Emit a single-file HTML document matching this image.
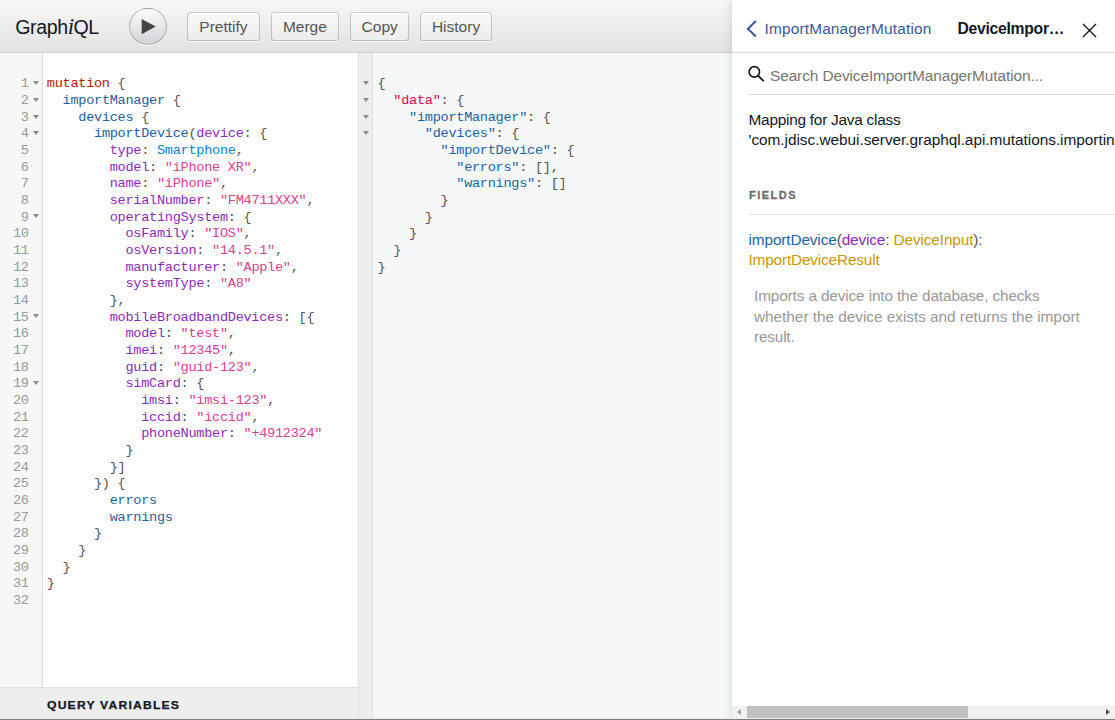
<!DOCTYPE html>
<html lang="en">
<head>
<meta charset="utf-8">
<title>GraphiQL</title>
<style>
*{box-sizing:border-box}
html,body{margin:0;padding:0;width:1115px;height:720px;overflow:hidden;background:#fff}
body{font-family:"Liberation Sans",sans-serif;font-size:14.6px;color:#141823;position:relative}
#app{position:absolute;left:0;top:0;width:1115px;height:720px;overflow:hidden}

/* ---------- top bar ---------- */
#topbar{position:absolute;left:0;top:0;width:732px;height:52.7px;background:linear-gradient(#f7f7f7,#e2e2e2);border-bottom:1px solid #d0d0d0}
#title{position:absolute;left:15.2px;top:14.1px;font-size:19.6px;line-height:26px;color:#141823;white-space:nowrap;letter-spacing:-0.4px}
#title em{font-family:"Liberation Serif",serif;font-size:23px;line-height:20px;font-style:italic;letter-spacing:-0.6px}
#exec{position:absolute;left:129.2px;top:7.5px;width:37.8px;height:37.4px;border-radius:50%;border:1px solid rgba(0,0,0,.25);background:linear-gradient(#fdfdfd,#d2d3d6);box-shadow:0 1px 0 #fff}
#exec svg{position:absolute;left:0;top:0;width:35.4px;height:35.4px}
.tb{position:absolute;top:12px;padding-top:1.2px;height:28.6px;border-radius:3.3px;background:linear-gradient(#f9f9f9,#ececec);box-shadow:inset 0 0 0 1px rgba(0,0,0,.2),0 1px 0 rgba(255,255,255,.7),inset 0 2px #fff;color:#555;font-size:15.5px;line-height:27px;text-align:center;white-space:nowrap}

/* ---------- query editor ---------- */
#qgutter{position:absolute;left:0;top:52.7px;width:43px;height:634px;background:#f7f7f7;border-right:1px solid #ddd}
#qed{position:absolute;left:43px;top:52.7px;width:314.5px;height:634px;background:#fff}
.code{position:absolute;margin:0;font-family:"Liberation Mono",monospace;font-size:13.6px;letter-spacing:-0.29px;line-height:16.65px;white-space:pre;color:#555}
.ln{position:absolute;margin:0;font-family:"Liberation Mono",monospace;font-size:13.6px;letter-spacing:-0.29px;line-height:16.65px;white-space:pre;color:#999;text-align:right}
.fold{position:absolute;width:0;height:0;border-left:3px solid transparent;border-right:3px solid transparent;border-top:4.9px solid #8c8c8c}
.k{color:#B11A04}.p{color:#1F61A0}.a{color:#8B2BB9}.s{color:#D64292}.e{color:#0B7FC7}.d{color:#D2054E}

#qvars{position:absolute;left:0;top:686.6px;width:357.5px;height:33.4px;background:#eee;border-top:1px solid #e0e0e0;color:#141823}
#qvars span{position:absolute;left:47.2px;top:9.6px;font-size:11.5px;line-height:16px;font-weight:bold;letter-spacing:1.1px;color:#141823;-webkit-text-stroke:0.25px #141823;white-space:nowrap;transform:scaleX(1.06);transform-origin:0 0}

/* ---------- result ---------- */
#rgutter{position:absolute;left:357.5px;top:52.7px;width:15.2px;height:667.3px;background:#eee;border-left:1px solid #e0e0e0;border-right:1px solid #e0e0e0}
#res{position:absolute;left:372.7px;top:52.7px;width:360px;height:667.3px;background:#f6f7f8}

/* ---------- docs ---------- */
#docs{position:absolute;left:732px;top:0;width:383px;height:720px;background:#fff;box-shadow:0 0 8.8px rgba(0,0,0,.15)}
#back{position:absolute;left:15px;top:19px;line-height:20px;font-size:15.4px;color:#3B5998;white-space:nowrap;letter-spacing:0.17px}
#chev{position:absolute;left:17.2px;top:22.9px;width:11.6px;height:11.6px;border-left:2.2px solid #3B5998;border-top:2.2px solid #3B5998;transform:rotate(-45deg)}
#dtitle{position:absolute;left:225.4px;top:18.8px;line-height:20px;font-size:15.7px;font-weight:bold;color:#141823;white-space:nowrap;letter-spacing:-0.25px}
#close{position:absolute;left:350.2px;top:22.5px;width:15px;height:15px}
#dline{position:absolute;left:0;top:51.6px;width:383px;height:1.1px;background:#dcdcdc}
#sline{position:absolute;left:16.5px;top:93.5px;width:367px;height:1px;background:#d3d6db}
#sicon{position:absolute;left:16px;top:65px;width:18px;height:18px}
#stext{position:absolute;left:38px;top:66px;font-size:15.4px;line-height:20px;color:#757575;white-space:nowrap;letter-spacing:-0.09px}
.dp{position:absolute;left:16.5px;font-size:15.4px;line-height:20.4px;color:#141823;white-space:nowrap;letter-spacing:-0.25px}
#fields{position:absolute;left:17px;top:186.6px;font-size:11px;line-height:16px;font-weight:bold;letter-spacing:1.5px;color:#6e6e6e;-webkit-text-stroke:0.3px #6e6e6e;white-space:nowrap}
#fline{position:absolute;left:16.5px;top:213.5px;width:367px;height:1px;background:#e0e0e0}
.t{color:#CA9800}.f{color:#1F61A0}.g{color:#8B2BB9}
.desc{position:absolute;left:22px;font-size:15.4px;line-height:20.4px;color:#999;white-space:nowrap;letter-spacing:-0.2px}

/* ---------- scrollbar ---------- */
#hs{position:absolute;left:0;top:705.7px;width:383px;height:14.3px;background:#f1f1f1}
#hthumb{position:absolute;left:15px;top:0;width:221.2px;height:14.3px;background:#c1c1c1}
.arr{position:absolute;top:3.1px;width:0;height:0;border-top:3.9px solid transparent;border-bottom:3.9px solid transparent}
#winb{position:absolute;left:0;top:718px;width:1115px;height:2px;border-top:1px solid rgba(255,255,255,.85);background:#7f7f7f;z-index:20}
</style>
</head>
<body>
<div id="app">

<div id="topbar">
  <div id="title">Graph<em>i</em>QL</div>
  <div id="exec"><svg viewBox="0 0 34 34"><path d="M 11.2 9.5 L 24.7 16.9 L 11.2 24.3 z" fill="#444"/></svg></div>
  <div class="tb" style="left:187.3px;width:72.3px">Prettify</div>
  <div class="tb" style="left:270.8px;width:68.2px">Merge</div>
  <div class="tb" style="left:350.2px;width:59px">Copy</div>
  <div class="tb" style="left:420.3px;width:71.5px">History</div>
</div>

<div id="qgutter"><pre class="ln" style="left:0;top:23.8px;width:28.7px">1
2
3
4
5
6
7
8
9
10
11
12
13
14
15
16
17
18
19
20
21
22
23
24
25
26
27
28
29
30
31
32</pre><i class="fold" style="left:32.6px;top:28.6px"></i><i class="fold" style="left:32.6px;top:45.2px"></i><i class="fold" style="left:32.6px;top:61.9px"></i><i class="fold" style="left:32.6px;top:78.5px"></i><i class="fold" style="left:32.6px;top:161.8px"></i><i class="fold" style="left:32.6px;top:261.7px"></i><i class="fold" style="left:32.6px;top:328.3px"></i></div>
<div id="qed"><pre class="code" style="left:3.8px;top:23.8px"><span class="k">mutation</span> {
  <span class="p">importManager</span> {
    <span class="p">devices</span> {
      <span class="p">importDevice</span>(<span class="a">device</span>: {
        <span class="a">type</span>: <span class="e">Smartphone</span>,
        <span class="a">model</span>: <span class="s">"iPhone XR"</span>,
        <span class="a">name</span>: <span class="s">"iPhone"</span>,
        <span class="a">serialNumber</span>: <span class="s">"FM4711XXX"</span>,
        <span class="a">operatingSystem</span>: {
          <span class="a">osFamily</span>: <span class="s">"IOS"</span>,
          <span class="a">osVersion</span>: <span class="s">"14.5.1"</span>,
          <span class="a">manufacturer</span>: <span class="s">"Apple"</span>,
          <span class="a">systemType</span>: <span class="s">"A8"</span>
        },
        <span class="a">mobileBroadbandDevices</span>: [{
          <span class="a">model</span>: <span class="s">"test"</span>,
          <span class="a">imei</span>: <span class="s">"12345"</span>,
          <span class="a">guid</span>: <span class="s">"guid-123"</span>,
          <span class="a">simCard</span>: {
            <span class="a">imsi</span>: <span class="s">"imsi-123"</span>,
            <span class="a">iccid</span>: <span class="s">"iccid"</span>,
            <span class="a">phoneNumber</span>: <span class="s">"+4912324"</span>
          }
        }]
      }) {
        <span class="p">errors</span>
        <span class="p">warnings</span>
      }
    }
  }
}
</pre></div>
<div id="rgutter"><i class="fold" style="left:4.7px;top:28.6px"></i><i class="fold" style="left:4.7px;top:45.2px"></i><i class="fold" style="left:4.7px;top:61.9px"></i><i class="fold" style="left:4.7px;top:78.5px"></i></div>
<div id="res"><pre class="code" style="left:4.9px;top:23.8px">{
  <span class="d">"data"</span>: {
    <span class="p">"importManager"</span>: {
      <span class="p">"devices"</span>: {
        <span class="p">"importDevice"</span>: {
          <span class="p">"errors"</span>: [],
          <span class="p">"warnings"</span>: []
        }
      }
    }
  }
}</pre></div>

<div id="qvars"><span>QUERY VARIABLES</span></div>

<div id="docs">
  <div id="chev"></div>
  <div id="back" style="left:32.5px">ImportManagerMutation</div>
  <div id="dtitle">DeviceImpor…</div>
  <svg id="close" viewBox="0 0 15 15"><path d="M1 1 L14 14 M14 1 L1 14" stroke="#141823" stroke-width="1.4" fill="none"/></svg>
  <div id="dline"></div>
  <svg id="sicon" viewBox="0 0 18 18"><circle cx="6.3" cy="6.9" r="5.2" fill="none" stroke="#141823" stroke-width="1.7"/><path d="M10.1 10.6 L15.1 15.6" stroke="#141823" stroke-width="1.9" stroke-linecap="round"/></svg>
  <div id="stext">Search DeviceImportManagerMutation...</div>
  <div id="sline"></div>
  <div class="dp" style="top:110px">Mapping for Java class</div>
  <div class="dp" style="top:130.4px;letter-spacing:-0.04px">'com.jdisc.webui.server.graphql.api.mutations.importing.DeviceImportManagerMutation'</div>
  <div id="fields">FIELDS</div>
  <div id="fline"></div>
  <div class="dp" style="top:229.8px;color:#555;letter-spacing:-0.14px"><span class="f">importDevice</span>(<span class="g">device</span>: <span class="t">DeviceInput</span>):</div>
  <div class="dp" style="top:250.2px;letter-spacing:-0.18px"><span class="t">ImportDeviceResult</span></div>
  <div class="desc" style="top:286px;letter-spacing:-0.15px">Imports a device into the database, checks</div>
  <div class="desc" style="top:306.8px;letter-spacing:-0.04px">whether the device exists and returns the import</div>
  <div class="desc" style="top:327.2px">result.</div>
  <div id="hs">
    <div class="arr" style="left:5.2px;border-right:4.3px solid #a3a3a3"></div>
    <div id="hthumb"></div>
    <div class="arr" style="left:373.8px;border-left:4.3px solid #505050"></div>
  </div>
</div>

<div id="winb"></div>
</div>
</body>
</html>
